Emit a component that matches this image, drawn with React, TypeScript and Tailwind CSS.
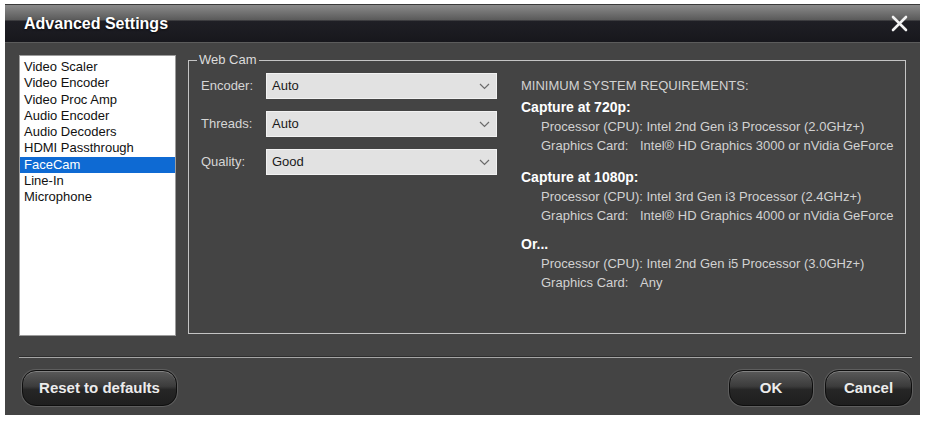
const items = [
  'Video Scaler',
  'Video Encoder',
  'Video Proc Amp',
  'Audio Encoder',
  'Audio Decoders',
  'HDMI Passthrough',
  'FaceCam',
  'Line-In',
  'Microphone',
];

const fields = [
  { label: 'Encoder:', value: 'Auto' },
  { label: 'Threads:', value: 'Auto' },
  { label: 'Quality:', value: 'Good' },
];

const sections = [
  {
    title: 'Capture at 720p:',
    cpu: 'Intel 2nd Gen i3 Processor (2.0GHz+)',
    gpu: 'Intel® HD Graphics 3000 or nVidia GeForce',
    gap: 'mt-[3px]',
  },
  {
    title: 'Capture at 1080p:',
    cpu: 'Intel 3rd Gen i3 Processor (2.4GHz+)',
    gpu: 'Intel® HD Graphics 4000 or nVidia GeForce',
    gap: 'mt-[13px]',
  },
  {
    title: 'Or...',
    cpu: 'Intel 2nd Gen i5 Processor (3.0GHz+)',
    gpu: 'Any',
    gap: 'mt-[10px]',
  },
];

function Chevron() {
  return (
    <svg width="11" height="7" viewBox="0 0 11 7" fill="none">
      <path d="M1 1l4.5 4.5L10 1" stroke="#6b6b6b" strokeWidth="1.2" />
    </svg>
  );
}

function Select({ value }: { value: string }) {
  return (
    <div className="flex h-[26px] w-[231px] items-center justify-between border border-[#f2f2f2] bg-[#e2e2e2] pl-[5px] pr-[6px] text-[13px] text-[#1a1a1a]">
      <span>{value}</span>
      <Chevron />
    </div>
  );
}

function GlossButton({ label, width }: { label: string; width: string }) {
  return (
    <button
      className={`${width} h-[36px] rounded-[14px] border border-[#0e0e0e] bg-[linear-gradient(to_bottom,#5a5a5a_0%,#3c3c3c_45%,#262626_55%,#1e1e1e_100%)] text-[15px] font-bold text-[#ececec] shadow-[inset_0_1px_0_rgba(255,255,255,0.25),0_0_0_1px_rgba(255,255,255,0.14)]`}
    >
      {label}
    </button>
  );
}

export default function App() {
  return (
    <div
      className="h-[421px] w-[925px] bg-white pb-[6px] pl-[5px] pr-[5px] pt-[4px]"
      style={{ fontFamily: '"Liberation Sans", Arial, sans-serif' }}
    >
      <div className="flex h-full flex-col bg-[#444444]">
        {/* Title bar */}
        <div className="flex h-[39px] items-center justify-between border-b border-[#5c5c5c] border-t border-t-[#3a3a3a] bg-[linear-gradient(to_bottom,#8a8a8a_0px,#5a5a5a_15px,#1f1f25_16px,#17171c_38px)] pl-[19px] pr-[12px]">
          <span className="text-[16px] font-bold text-white [text-shadow:0_1px_2px_rgba(0,0,0,0.6)]">
            Advanced Settings
          </span>
          <svg width="17" height="17" viewBox="0 0 17 17">
            <path d="M2 2l13 13M15 2L2 15" stroke="#f2f2f2" strokeWidth="2.6" strokeLinecap="round" />
          </svg>
        </div>

        {/* Body */}
        <div className="flex items-start gap-[12px] pl-[14px] pr-[14px]">
          <div className="mt-[12px] h-[281px] w-[157px] border border-[#9c9c9c] bg-white pt-[3px] text-[13px] leading-[16.25px] text-[#111]">
            {items.map(item => (
              <div
                key={item}
                className={
                  item === 'FaceCam'
                    ? 'bg-[#0e6ad3] pl-[4px] text-white'
                    : 'pl-[4px]'
                }
              >
                {item}
              </div>
            ))}
          </div>

          <fieldset className="mt-[9px] h-[282px] flex-1 border border-[#c4c4c4] pl-[8px]">
            <legend className="px-[2px] text-[13px] leading-[16px] text-[#dcdcdc]">Web Cam</legend>
            <div className="flex pl-[4px]">
              <div className="flex flex-col gap-[12px] pt-[5px]">
                {fields.map(f => (
                  <div key={f.label} className="flex items-center">
                    <span className="w-[65px] text-[13px] text-[#d6d6d6]">{f.label}</span>
                    <Select value={f.value} />
                  </div>
                ))}
              </div>

              <div className="ml-[24px] flex flex-col pt-[8px] text-[13px] leading-[19px] text-[#d2d2d2]">
                <div>MINIMUM SYSTEM REQUIREMENTS:</div>
                {sections.map(s => (
                  <div key={s.title} className={s.gap}>
                    <div className="text-[14px] font-bold text-white">{s.title}</div>
                    <div className="pl-[20px]">
                      <div>Processor (CPU): {s.cpu}</div>
                      <div>
                        <span className="inline-block w-[99px]">Graphics Card:</span>
                        {s.gpu}
                      </div>
                    </div>
                  </div>
                ))}
              </div>
            </div>
          </fieldset>
        </div>

        {/* Separator */}
        <div className="ml-[14px] mr-[8px] mt-[20px] h-[2px] border-t border-[#2e2e2e] bg-[#a6a6a6]" />

        {/* Buttons */}
        <div className="mt-[12px] flex items-center pl-[17px] pr-[8px]">
          <GlossButton label="Reset to defaults" width="w-[155px]" />
          <div className="flex-1" />
          <GlossButton label="OK" width="w-[84px]" />
          <div className="w-[12px]" />
          <GlossButton label="Cancel" width="w-[87px]" />
        </div>
      </div>
    </div>
  );
}
